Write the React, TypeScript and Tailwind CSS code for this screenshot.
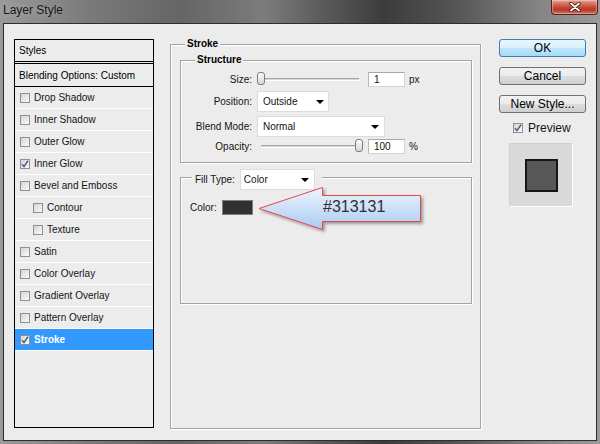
const effects = [
  { label: 'Drop Shadow' },
  { label: 'Inner Shadow' },
  { label: 'Outer Glow' },
  { label: 'Inner Glow', checked: true },
  { label: 'Bevel and Emboss' },
  { label: 'Contour', sub: true },
  { label: 'Texture', sub: true },
  { label: 'Satin' },
  { label: 'Color Overlay' },
  { label: 'Gradient Overlay' },
  { label: 'Pattern Overlay' },
  { label: 'Stroke', checked: true, active: true },
]

function CheckBox({ checked = false }: { checked?: boolean }) {
  return (
    <span className="flex h-[10px] w-[10px] shrink-0 items-center justify-center border border-[#8f8f8f] bg-[linear-gradient(135deg,#d4d4d4,#fbfbfb)]">
      {checked && (
        <svg width="8" height="8" viewBox="0 0 8 8">
          <path d="M1 4.2 L3 6.6 L7 0.8" fill="none" stroke="#4a5b8c" strokeWidth="1.5" />
        </svg>
      )}
    </span>
  )
}

function Arrow() {
  return <span className="h-0 w-0 border-x-[4px] border-t-[4px] border-x-transparent border-t-black" />
}

function Slider({ at }: { at: 'start' | 'end' }) {
  return (
    <div className="relative h-[16px] w-[106px]">
      <div className="absolute left-[4px] right-[4px] top-[7px] h-[3px] border-t border-b border-t-[#a5a5a5] border-b-white bg-[#d6d6d6]" />
      <div
        className={`absolute top-[1px] h-[13px] w-[8px] rounded-[3px] border border-[#7c7c7c] bg-[linear-gradient(#fdfdfd,#d6d6d6)] ${
          at === 'start' ? 'left-0' : 'right-0'
        }`}
      />
    </div>
  )
}

function NumberBox({ value }: { value: string }) {
  return (
    <div className="flex h-[15px] w-[37px] items-center border border-[#d2d2d2] border-t-[#a8a8a8] border-l-[#b8b8b8] bg-white pl-[5px] text-[10px] text-[#111]">
      {value}
    </div>
  )
}

export default function App() {
  return (
    <div className="flex h-[444px] w-[600px] flex-col overflow-hidden bg-[linear-gradient(90deg,#9a9a9a_0%,#7a7a7a_15%,#656565_30%,#7c7c7c_44%,#5a5a5a_54%,#3c3c3c_64%,#555555_76%,#858585_90%,#9a9a9a_100%)] font-['Liberation_Sans',Arial,sans-serif] text-[#141414]">
      {/* title bar */}
      <div className="relative flex h-[23px] shrink-0">
        <span className="ml-[3px] mt-[3px] text-[12px] leading-[14px] text-[#161616] [text-shadow:0_0_6px_rgba(255,255,255,0.35)]">
          Layer Style
        </span>
        <div className="absolute right-[2px] top-0 flex h-[15px] w-[47px] items-center justify-center rounded-b-[4px] border border-t-0 border-[#5a1f1a] bg-[linear-gradient(#e8a08f,#c64a39_50%,#b23a2a_70%,#d7705b)] shadow-[inset_0_0_1px_1px_rgba(255,255,255,0.35)]">
          <svg width="12" height="10" viewBox="0 0 12 10">
            <path d="M2 1.5 L10 8.5 M10 1.5 L2 8.5" stroke="#3a1410" strokeWidth="3.4" strokeLinecap="round" />
            <path d="M2 1.5 L10 8.5 M10 1.5 L2 8.5" stroke="#ffffff" strokeWidth="1.8" strokeLinecap="round" />
          </svg>
        </div>
      </div>

      {/* client area */}
      <div className="mx-[3px] flex h-[418px] border border-[#2e2e2e] bg-[#ececec]">
        {/* styles list */}
        <div className="ml-[10px] mt-[15px] flex h-[389px] w-[140px] flex-col border border-black text-[10px]">
          <div className="flex h-[24px] items-center border-b-[3px] border-double border-black pl-[4px] text-black">
            Styles
          </div>
          <div className="flex h-[23px] items-center border-b border-black pl-[4px] text-black">
            Blending Options: Custom
          </div>
          {effects.map((e) => (
            <div
              key={e.label}
              className={`flex h-[22px] items-center border-b border-white ${e.sub ? 'pl-[18px]' : 'pl-[5px]'} ${
                e.active ? 'bg-[#3399ff] font-bold text-white' : ''
              }`}
            >
              <CheckBox checked={e.checked} />
              <span className="ml-[4px]">{e.label}</span>
            </div>
          ))}
        </div>

        {/* stroke panel */}
        <div className="ml-[16px] mt-[20px] flex h-[385px] w-[311px] flex-col border border-[#a3a3a3] shadow-[1px_1px_0_#fff,inset_1px_1px_0_#fff] text-[10px]">
          <div className="-mt-[7px] ml-[14px] h-[12px] w-fit bg-[#ececec] px-[2px] font-bold leading-[12px] text-black">
            Stroke
          </div>

          {/* structure */}
          <div className="ml-[9px] mt-[10px] flex h-[103px] w-[292px] flex-col border border-[#a3a3a3] shadow-[1px_1px_0_#fff,inset_1px_1px_0_#fff]">
            <div className="-mt-[7px] ml-[14px] h-[12px] w-fit bg-[#ececec] px-[2px] font-bold leading-[12px] text-black">
              Structure
            </div>
            <div className="mt-[5px] flex h-[16px] items-center">
              <span className="w-[71px] text-right">Size:</span>
              <div className="ml-[5px]">
                <Slider at="start" />
              </div>
              <div className="ml-[5px]">
                <NumberBox value="1" />
              </div>
              <span className="ml-[4px]">px</span>
            </div>
            <div className="mt-[4px] flex h-[21px] items-center">
              <span className="w-[71px] text-right">Position:</span>
              <div className="ml-[5px] flex h-[21px] w-[72px] items-center justify-between border border-[#dcdcdc] bg-white pl-[5px] pr-[4px]">
                <span>Outside</span>
                <Arrow />
              </div>
            </div>
            <div className="mt-[4px] flex h-[21px] items-center">
              <span className="w-[71px] text-right">Blend Mode:</span>
              <div className="ml-[5px] flex h-[21px] w-[128px] items-center justify-between border border-[#dcdcdc] bg-white pl-[5px] pr-[5px]">
                <span>Normal</span>
                <Arrow />
              </div>
            </div>
            <div className="mt-[1px] flex h-[16px] items-center">
              <span className="w-[71px] text-right">Opacity:</span>
              <div className="ml-[5px]">
                <Slider at="end" />
              </div>
              <div className="ml-[5px]">
                <NumberBox value="100" />
              </div>
              <span className="ml-[4px]">%</span>
            </div>
          </div>

          {/* fill type */}
          <div className="relative ml-[9px] mt-[14px] flex h-[127px] w-[292px] flex-col border border-[#a3a3a3] shadow-[1px_1px_0_#fff,inset_1px_1px_0_#fff]">
            <div className="-mt-[9px] ml-[11px] flex h-[21px] w-fit items-center bg-[#ececec] pl-[3px] pr-[7px]">
              <span>Fill Type:</span>
              <div className="ml-[5px] flex h-[21px] w-[75px] items-center justify-between border border-[#dcdcdc] bg-white pl-[3px] pr-[5px]">
                <span>Color</span>
                <Arrow />
              </div>
            </div>
            <div className="ml-[9px] mt-[10px] flex h-[15px] items-center">
              <span>Color:</span>
              <span className="ml-[5px] h-[15px] w-[31px] border border-[#7d7d7d] bg-[#313131]" />
            </div>

            {/* annotation arrow */}
            <div className="absolute left-[77px] top-[9px] h-[48px] w-[170px]">
              <svg width="170" height="48" viewBox="0 0 170 48" className="absolute left-0 top-0">
                <defs>
                  <linearGradient id="arrowFill" x1="0" y1="0" x2="0" y2="1">
                    <stop offset="0" stopColor="#edf4fe" />
                    <stop offset="1" stopColor="#a9cbf4" />
                  </linearGradient>
                  <filter id="arrowShadow" x="-10%" y="-20%" width="130%" height="150%">
                    <feDropShadow dx="2" dy="2" stdDeviation="1.8" floodColor="#000" floodOpacity="0.35" />
                  </filter>
                </defs>
                <path
                  d="M1 21.5 L64.5 0.5 L64.5 8.5 L162.5 8.5 L162.5 34.5 L64.5 34.5 L64.5 42.5 Z"
                  fill="url(#arrowFill)"
                  stroke="#e8474a"
                  strokeWidth="1"
                  filter="url(#arrowShadow)"
                />
              </svg>
              <span className="absolute left-[65px] top-[10px] text-[16px] leading-[20px] text-[#2f2f2f]">#313131</span>
            </div>
          </div>
        </div>

        {/* buttons */}
        <div className="ml-[18px] mt-[15px] flex w-[87px] flex-col text-[12px]">
          <div className="flex h-[18px] items-center justify-center rounded-[3px] border border-[#3c7fb1] bg-[linear-gradient(#eaf6fd,#d9f0fc_50%,#bee6fd_51%,#a7d9f5)] text-black">
            OK
          </div>
          <div className="mt-[10px] flex h-[18px] items-center justify-center rounded-[3px] border border-[#707070] bg-[linear-gradient(#f2f2f2,#ebebeb_50%,#dddddd_51%,#cfcfcf)] text-black">
            Cancel
          </div>
          <div className="mt-[10px] flex h-[18px] items-center justify-center rounded-[3px] border border-[#707070] bg-[linear-gradient(#f2f2f2,#ebebeb_50%,#dddddd_51%,#cfcfcf)] text-black">
            New Style...
          </div>
          <div className="ml-[14px] mt-[8px] flex h-[14px] items-center">
            <CheckBox checked />
            <span className="ml-[5px]">Preview</span>
          </div>
          <div className="ml-[10px] mt-[8px] flex h-[64px] w-[64px] items-center justify-center border border-[#d0d0d0] border-b-white border-r-white bg-[#d9d9d9]">
            <span className="h-[33px] w-[33px] border-2 border-[#161616] bg-[#575757]" />
          </div>
        </div>
      </div>
    </div>
  )
}
